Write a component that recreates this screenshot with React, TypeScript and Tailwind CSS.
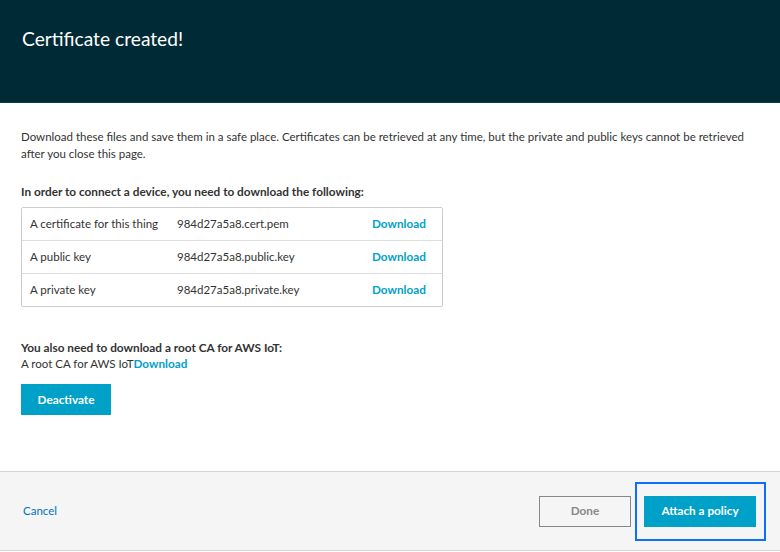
import React from "react";

const rows = [
  ["A certificate for this thing", "984d27a5a8.cert.pem"],
  ["A public key", "984d27a5a8.public.key"],
  ["A private key", "984d27a5a8.private.key"],
];

export default function App() {
  return (
    <div
      className="w-[780px] h-[552px] bg-white flex flex-col text-[#333333]"
      style={{ fontFamily: "Lato, 'Liberation Sans', sans-serif" }}
    >
      <div className="h-[103px] bg-[#002b36] border-b border-[#0b3c45] pl-[22px] pt-[27px] shrink-0">
        <h1 className="text-[19.2px] leading-[24px] text-white">Certificate created!</h1>
      </div>
      <div className="pl-[21px] pr-[18px] pt-[25px] flex-1 text-[11.5px]">
        <p className="leading-[17px]">
          Download these files and save them in a safe place. Certificates can be retrieved at any time, but the private and public keys cannot be retrieved after you close this page.
        </p>
        <p className="mt-[21px] leading-[17px] font-bold text-[11.8px]">
          In order to connect a device, you need to download the following:
        </p>
        <div className="mt-[7px] w-[422px] border border-[#cccccc] rounded-[2px]">
          {rows.map(([a, b], i) => (
            <div
              key={a}
              className={`flex items-center ${i > 0 ? "h-[33px] border-t border-[#dddddd]" : "h-[32px]"}`}
            >
              <span className="w-[155px] pl-[8px]">{a}</span>
              <span className="w-[195px]">{b}</span>
              <a className="font-bold text-[#00a1c9] text-[11.75px]">Download</a>
            </div>
          ))}
        </div>
        <p className="mt-[32px] leading-[17px] font-bold text-[11.8px]">
          You also need to download a root CA for AWS IoT:
        </p>
        <p className="leading-[16px]">
          A root CA for AWS IoT<a className="font-bold text-[#00a1c9] text-[11.75px]">Download</a>
        </p>
        <button className="mt-[12px] w-[90px] h-[31px] bg-[#00a1c9] text-white font-bold text-[11.75px]">
          Deactivate
        </button>
      </div>
      <div className="h-[80px] mb-[1px] bg-[#f5f5f5] border-t border-b border-[#d5d5d5] flex items-center pl-[23px] pr-[14px] shrink-0 text-[11.75px]">
        <a className="text-[#0073bb] text-[11.5px]">Cancel</a>
        <div className="ml-auto flex items-center">
          <button className="w-[92px] h-[31px] border border-[#888888] bg-[#f5f5f5] text-[#888888] font-bold">
            Done
          </button>
          <div className="ml-[4px] border-2 border-[#0d6efd] pl-[7px] pr-[8px] pt-[12px] pb-[12px]">
            <button className="block w-[112px] h-[31px] bg-[#00a1c9] text-white font-bold">
              Attach a policy
            </button>
          </div>
        </div>
      </div>
    </div>
  );
}
